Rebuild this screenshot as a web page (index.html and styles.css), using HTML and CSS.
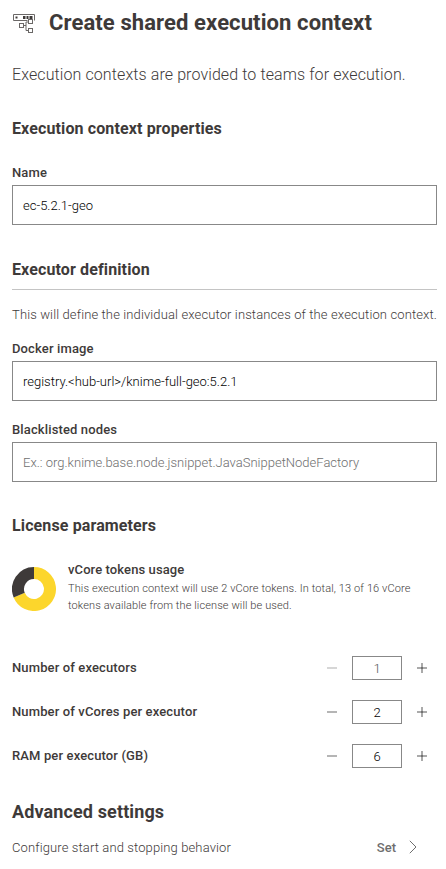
FILE: index.html
```html
<!DOCTYPE html>
<html lang="en">
<head>
<meta charset="utf-8">
<title>Create shared execution context</title>
<link rel="stylesheet" href="styles.css">
</head>
<body>
<main class="panel">
  <header class="header">
    <svg class="header-icon" viewBox="0 0 24 20" fill="none" stroke="#6b6867">
      <path d="M15.5 7.5h-14v-6h21v6"/>
      <path d="M11 4.5h2.5M14.5 4.5h2M17.5 4.5h3" stroke="#3e3a39" stroke-width="3"/>
      <path d="M3.5 4.5h2" stroke="#3e3a39" stroke-width="2"/>
      <rect x="7.5" y="10.5" width="4" height="4"/>
      <rect x="16.5" y="6.5" width="4" height="4" fill="#fff"/>
      <rect x="16.5" y="15.5" width="4" height="4"/>
      <path d="M11.5 12.5h2.5M16.5 9h-2.5v8.5h2.5"/>
    </svg>
    <h1>Create shared execution context</h1>
  </header>
  <p class="lead">Execution contexts are provided to teams for execution.</p>

  <section class="properties">
    <h2>Execution context properties</h2>
    <label class="label" for="name">Name</label>
    <input class="input" id="name" value="ec-5.2.1-geo">
  </section>

  <section class="definition">
    <h2>Executor definition</h2>
    <p class="note">This will define the individual executor instances of the execution context.</p>
    <label class="label" for="image">Docker image</label>
    <input class="input" id="image" value="registry.&lt;hub-url&gt;/knime-full-geo:5.2.1">
    <label class="label next" for="nodes">Blacklisted nodes</label>
    <input class="input" id="nodes" placeholder="Ex.: org.knime.base.node.jsnippet.JavaSnippetNodeFactory">
  </section>

  <section class="license">
    <h2>License parameters</h2>
    <div class="usage">
      <svg class="donut" viewBox="0 0 44 44" fill="none" stroke-width="12">
        <path d="M22 6A16 16 0 1 1 7.2 28.1" stroke="#fcd62c"/>
        <path d="M7.2 28.1A16 16 0 0 1 22 6" stroke="#3e3a39"/>
      </svg>
      <div>
        <h3>vCore tokens usage</h3>
        <p class="usage-text">This execution context will use 2 vCore tokens. In total, 13 of 16 vCore<br>tokens available from the license will be used.</p>
      </div>
    </div>
    <div class="row">
      <span class="label">Number of executors</span>
      <span class="stepper"><i class="minus off"></i><span class="count off">1</span><i class="plus"></i></span>
    </div>
    <div class="row">
      <span class="label">Number of vCores per executor</span>
      <span class="stepper"><i class="minus"></i><span class="count">2</span><i class="plus"></i></span>
    </div>
    <div class="row">
      <span class="label">RAM per executor (GB)</span>
      <span class="stepper"><i class="minus"></i><span class="count">6</span><i class="plus"></i></span>
    </div>
  </section>

  <section class="advanced">
    <h2>Advanced settings</h2>
    <div class="setting">
      <span class="setting-text">Configure start and stopping behavior</span>
      <span class="set">Set
        <svg class="chevron" viewBox="0 0 8 14" fill="none" stroke="#6e6e6e"><path d="M.8.8 7 7 .8 13.2"/></svg>
      </span>
    </div>
  </section>
</main>
</body>
</html>
```
FILE: styles.css
```css
* { box-sizing: border-box; margin: 0; padding: 0; }
body {
  background: #fff;
  color: #3e3a39;
  font-family: Roboto, "Liberation Sans", sans-serif;
  font-size: 13px;
  overflow: hidden;
}
.panel { padding: 9px 9px 0 12px; height: 869px; }
.header { display: flex; align-items: center; height: 28px; gap: 13px; }
.header-icon { width: 24px; height: 20px; }
h1 { font-size: 22px; font-weight: 700; line-height: 28px; letter-spacing: .1px; white-space: nowrap; }
.lead { margin-top: 28px; font-size: 16px; font-weight: 300; line-height: 20px; letter-spacing: .1px; white-space: nowrap; }
h2 { font-size: 16px; font-weight: 700; line-height: 20px; letter-spacing: .12px; white-space: nowrap; }
.properties { margin-top: 34px; }
.label { display: block; font-weight: 500; line-height: 16px; letter-spacing: .13px; white-space: nowrap; }
.properties .label { margin-top: 26px; }
.input {
  display: block;
  width: 100%;
  height: 40px;
  margin-top: 4px;
  padding: 0 10px;
  border: 1px solid #888;
  background: #fff;
  color: #000;
  font: 300 13px/38px Roboto, sans-serif;
}
.input::placeholder { color: #6e6e6e; opacity: 1; }
.definition { margin-top: 35px; }
.definition h2 { height: 30px; border-bottom: 1px solid #c4c4c4; }
.note { margin-top: 17px; font-weight: 300; line-height: 16px; letter-spacing: .12px; white-space: nowrap; }
.definition .label { margin-top: 18px; }
.definition .next { margin-top: 21px; }
.license { margin-top: 34px; }
.usage { display: flex; gap: 12px; margin-top: 26px; height: 55px; }
.donut { flex: none; width: 44px; height: 44px; margin-top: 5px; }
h3 { font-size: 13px; font-weight: 500; line-height: 16px; letter-spacing: .1px; }
.usage-text { margin-top: 2px; font-size: 11px; font-weight: 300; line-height: 17px; white-space: nowrap; letter-spacing: .11px; }
.row { display: flex; justify-content: space-between; align-items: center; height: 24px; margin-top: 20px; }
.usage + .row { margin-top: 39px; }
.stepper { display: flex; align-items: center; padding-right: 10px; }
.count { width: 50px; height: 24px; margin: 0 15px; border: 1px solid #888; color: #000; font-weight: 300; line-height: 24px; text-align: center; }
.count.off { color: #555; }
.minus, .plus { width: 10px; height: 10px; background: linear-gradient(#b5b5b5, #b5b5b5) center / 10px 2px no-repeat; }
.plus { background: linear-gradient(#0005, #0005) center / 10px 2px no-repeat, linear-gradient(#0005, #0005) center / 2px 10px no-repeat; }
.minus.off { opacity: .55; }
.advanced { margin-top: 32px; }
.advanced h2 { font-size: 18px; line-height: 24px; }
.setting { display: flex; justify-content: space-between; align-items: center; height: 20px; margin-top: 13px; padding-right: 20px; }
.setting-text { font-weight: 300; letter-spacing: .12px; }
.set { display: flex; align-items: center; gap: 13px; color: #6e6e6e; font-weight: 500; }
.chevron { width: 8px; height: 14px; }
```
